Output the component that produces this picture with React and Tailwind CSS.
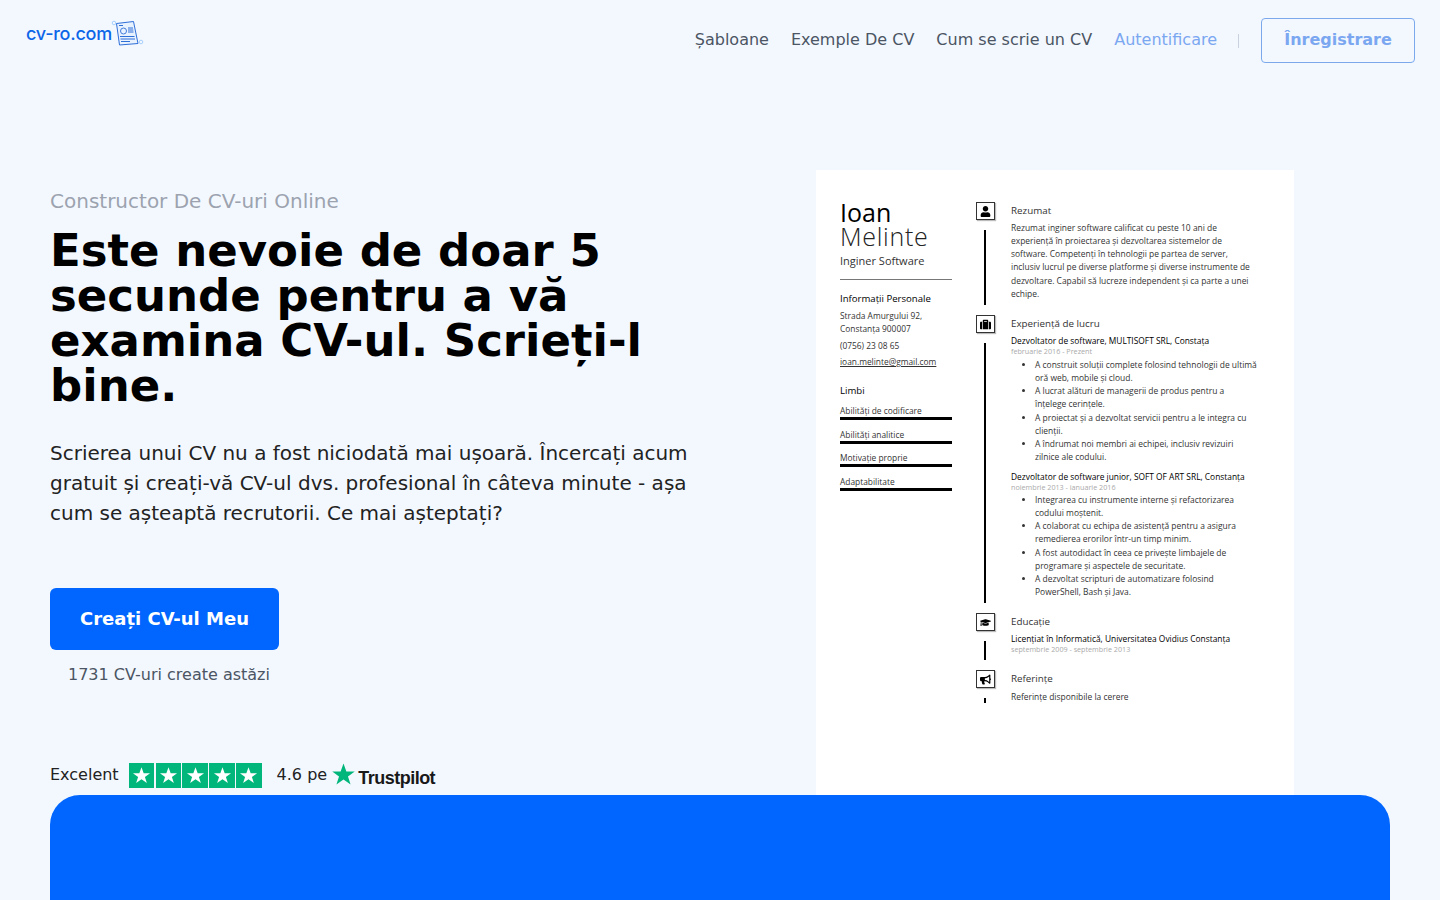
import React from "react";
import { FaUser, FaSuitcase, FaGraduationCap, FaBullhorn } from "react-icons/fa";

const Star = ({ className }) => (
  <svg viewBox="0 0 24 24" className={className} fill="currentColor">
    <path d="M12 1.5l2.75 7.6h8.05l-6.5 4.75 2.5 7.75L12 16.8l-6.8 4.8 2.5-7.75L1.2 9.1h8.05z" />
  </svg>
);

const Logo = () => (
  <svg viewBox="0 0 34 30" className="w-[34px] h-[30px] -ml-[2px]" fill="none">
    <circle cx="3" cy="4" r="1.8" stroke="#93c5fd" strokeWidth="0.8" />
    <circle cx="30" cy="23" r="1.8" stroke="#93c5fd" strokeWidth="0.8" />
    <path d="M5.5 4.5L22.5 2.5L27 24.5L8.5 26Z" fill="#e8f1fe" stroke="#2f6fd8" strokeWidth="1" />
    <path d="M8 6.5h4" stroke="#2f6fd8" strokeWidth="1" />
    <circle cx="12.5" cy="12" r="3" stroke="#2f6fd8" strokeWidth="0.9" />
    <path d="M17 9h5M17 11h5.3M17 13h5.5" stroke="#2f6fd8" strokeWidth="1" />
    <path d="M9 17.5h14.5M9.5 20h14.5M10 22.5h9" stroke="#2f6fd8" strokeWidth="1" />
  </svg>
);

const NavLink = ({ children, className = "text-[#4b5563]" }) => (
  <a className={`text-base leading-6 ${className}`}>{children}</a>
);

const Skill = ({ label }) => (
  <div className="mb-[8.5px]">
    <div className="text-[8.4px] leading-[12px] text-[#333]">{label}</div>
    <div className="h-[3px] bg-black" />
  </div>
);

const Bullets = ({ items }) => (
  <ul className="pl-[24px] pr-[1px] list-disc text-[8.45px] leading-[13.25px] text-[#333]">
    {items.map((t) => (
      <li key={t}>{t}</li>
    ))}
  </ul>
);

const Heading = ({ children }) => (
  <div className="text-[9.8px] leading-[18px] text-[#333]">{children}</div>
);

const Job = ({ title, date }) => (
  <>
    <div className="text-[8.4px] leading-[12px] font-medium text-black whitespace-nowrap">{title}</div>
    <div className="text-[7.2px] leading-[9px] text-[#aaa]">{date}</div>
  </>
);

const Section = ({ icon, height, last, children }) => (
  <div className={`flex gap-[16px] ${height}`}>
    <div className="w-[19px] flex flex-col shrink-0">
      <div className="w-[19px] h-[18px] border border-[#333] shadow-[1px_1px_1px_#bbb] flex items-center justify-center text-[11px] text-black shrink-0">
        {icon}
      </div>
      <div className={`w-[2px] flex-1 bg-black mt-[10px] ml-[8px] ${last ? "" : "mb-[10px]"}`} />
    </div>
    <div className="flex-1">{children}</div>
  </div>
);

const Resume = () => (
  <div className="w-[478px] h-[625px] bg-white overflow-hidden flex pl-[24px] pt-[32px] font-['Open_Sans',sans-serif] shrink-0">
    <div className="w-[112px] shrink-0 -mt-[2px]">
      <div className="text-[25px] leading-[24px] text-black">Ioan</div>
      <div className="text-[25px] leading-[24px] font-light tracking-[0.7px] text-[#222]">Melinte</div>
      <div className="text-[11px] leading-[16px] text-[#333] mt-[5px]">Inginer Software</div>
      <div className="h-[1px] bg-[#777] mt-[10px]" />
      <div className="text-[9.6px] leading-[14px] font-medium text-black mt-[12px]">Informații Personale</div>
      <div className="text-[8.4px] leading-[13px] text-[#333] mt-[3px]">
        Strada Amurgului 92,<br />Constanța 900007
      </div>
      <div className="text-[8.4px] leading-[13px] text-[#333] mt-[4px]">(0756) 23 08 65</div>
      <div className="text-[8.4px] leading-[13px] text-[#333] mt-[3px] underline">ioan.melinte@gmail.com</div>
      <div className="text-[9.6px] leading-[14px] font-medium text-black mt-[16px] mb-[7px]">Limbi</div>
      <Skill label="Abilități de codificare" />
      <Skill label="Abilități analitice" />
      <Skill label="Motivație proprie" />
      <Skill label="Adaptabilitate" />
    </div>
    <div className="w-[282px] ml-[24px] shrink-0">
      <Section icon={<FaUser />} height="h-[113px]">
        <Heading>Rezumat</Heading>
        <p className="text-[8.45px] leading-[13.25px] text-[#333] mt-[0.5px]">
          Rezumat inginer software calificat cu peste 10 ani de experiență în proiectarea și dezvoltarea sistemelor de software. Competenți în tehnologii pe partea de server, inclusiv lucrul pe diverse platforme și diverse instrumente de dezvoltare. Capabil să lucreze independent și ca parte a unei echipe.
        </p>
      </Section>
      <Section icon={<FaSuitcase />} height="h-[298px]">
        <Heading>Experiență de lucru</Heading>
        <div className="mt-[1.5px]">
          <Job title="Dezvoltator de software, MULTISOFT SRL, Constața" date="februarie 2016 - Prezent" />
          <div className="mt-[2px]">
            <Bullets items={[
              "A construit soluții complete folosind tehnologii de ultimă oră web, mobile și cloud.",
              "A lucrat alături de managerii de produs pentru a înțelege cerințele.",
              "A proiectat și a dezvoltat servicii pentru a le integra cu clienții.",
              "A îndrumat noi membri ai echipei, inclusiv revizuiri zilnice ale codului.",
            ]} />
          </div>
          <div className="mt-[7.5px]">
            <Job title="Dezvoltator de software junior, SOFT OF ART SRL, Constanța" date="noiembrie 2013 - ianuarie 2016" />
          </div>
          <div className="mt-[0.5px]">
            <Bullets items={[
              "Integrarea cu instrumente interne și refactorizarea codului moștenit.",
              "A colaborat cu echipa de asistență pentru a asigura remedierea erorilor într-un timp minim.",
              "A fost autodidact în ceea ce privește limbajele de programare și aspectele de securitate.",
              "A dezvoltat scripturi de automatizare folosind PowerShell, Bash și Java.",
            ]} />
          </div>
        </div>
      </Section>
      <Section icon={<FaGraduationCap />} height="h-[57px]">
        <Heading>Educație</Heading>
        <div className="mt-[2px]">
          <Job title="Licențiat în Informatică, Universitatea Ovidius Constanța" date="septembrie 2009 - septembrie 2013" />
        </div>
      </Section>
      <Section icon={<FaBullhorn />} height="h-[33px]" last>
        <Heading>Referințe</Heading>
        <div className="text-[8.45px] leading-[13px] text-[#333] mt-[1.5px]">Referințe disponibile la cerere</div>
      </Section>
    </div>
  </div>
);

export default function App() {
  return (
    <div className="h-screen overflow-hidden bg-[#f3f8ff] flex flex-col font-['DejaVu_Sans',sans-serif]">
      <header className="h-[78px] shrink-0 flex items-start justify-between pl-[26px] pr-[25px] pt-[18px]">
        <div className="flex items-center gap-[1px] mt-[1px]">
          <span className="font-['Inter',sans-serif] text-[18px] leading-[30px] font-medium text-[#0d66e8] tracking-[-0.25px]">cv-ro.com</span>
          <Logo />
        </div>
        <nav className="flex items-center gap-[22px] h-[45px]">
          <NavLink className="text-[#4b5563] -mt-[2px]">Șabloane</NavLink>
          <NavLink className="text-[#4b5563] -mt-[2px]">Exemple De CV</NavLink>
          <NavLink className="text-[#4b5563] -mt-[2px]">Cum se scrie un CV</NavLink>
          <NavLink className="text-[#7ba7f1] -mt-[2px]">Autentificare</NavLink>
          <span className="w-[1px] h-[14px] bg-[#c9d2dd] -ml-[1px]" />
          <a className="w-[154px] h-[45px] border border-[#7ba9ec] rounded-[4px] flex items-center justify-center text-base font-bold text-[#7ba7f1] pb-[2px]">
            Înregistrare
          </a>
        </nav>
      </header>

      <main className="flex-1 min-h-0 flex pl-[50px]">
        <section className="w-[766px] shrink-0 pt-[110px] flex flex-col">
          <div className="text-xl leading-[26px] text-[#9ca3af]">Constructor De CV-uri Online</div>
          <h1 className="text-[45px] leading-[45px] font-bold text-black mt-[14px] w-[640px]">
            Este nevoie de doar 5 secunde pentru a vă examina CV-ul. Scrieți-l bine.
          </h1>
          <p className="text-xl leading-[30px] text-[#222] mt-[30px] w-[650px]">
            Scrierea unui CV nu a fost niciodată mai ușoară. Încercați acum gratuit și creați-vă CV-ul dvs. profesional în câteva minute - așa cum se așteaptă recrutorii. Ce mai așteptați?
          </p>
          <a className="mt-[60px] w-[229px] h-[62px] rounded-[6px] bg-[#0066ff] text-white text-lg font-bold flex items-center justify-center">
            Creați CV-ul Meu
          </a>
          <div className="mt-[13px] ml-[18px] text-base leading-6 text-[#4b5563]">1731 CV-uri create astăzi</div>
          <div className="mt-auto mb-[7px] flex items-center h-[26px] text-base text-[#222]">
            <span>Excelent</span>
            <div className="flex gap-[1.5px] ml-[10px]">
              {[0, 1, 2, 3, 4].map((i) => (
                <div key={i} className="w-[25.4px] h-[25px] bg-[#00b67a] flex items-center justify-center text-white">
                  <Star className="w-[19px] h-[19px]" />
                </div>
              ))}
            </div>
            <span className="ml-[15px]">4.6 pe</span>
            <Star className="w-[25px] h-[25px] text-[#00b67a] ml-[4px] -mt-[2px]" />
            <span className="font-['Liberation_Sans',sans-serif] font-bold text-[18px] tracking-[-0.5px] text-[#191919] ml-[2px] mt-[6px]">Trustpilot</span>
          </div>
        </section>
        <section className="pt-[92px]">
          <Resume />
        </section>
      </main>

      <div className="h-[105px] shrink-0 mx-[50px] bg-[#0066ff] rounded-t-[30px]" />
    </div>
  );
}
